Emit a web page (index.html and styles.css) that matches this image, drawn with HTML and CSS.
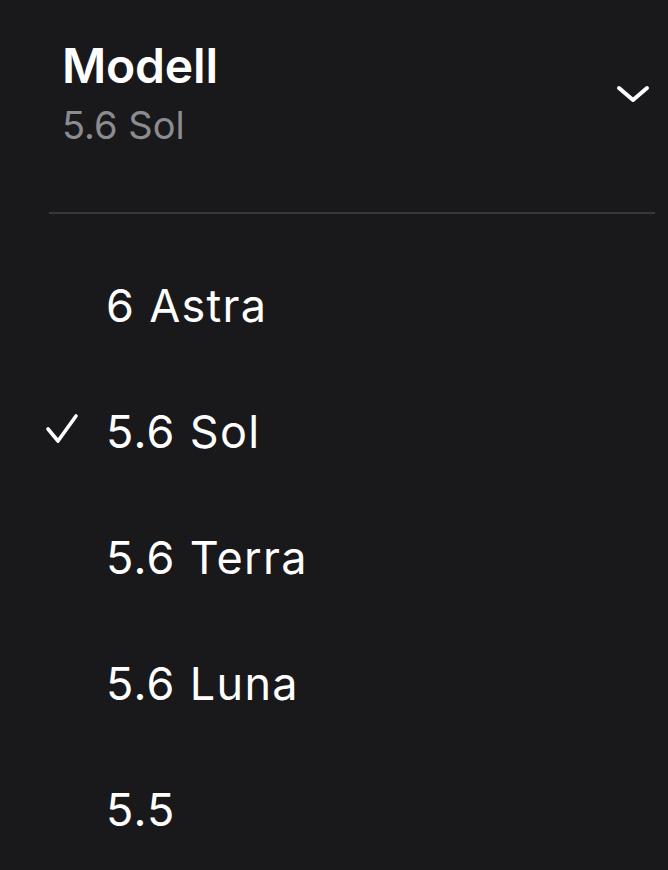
FILE: index.html
```html
<!DOCTYPE html>
<html lang="de">
<head>
    <meta charset="UTF-8">
    <meta name="viewport" content="width=device-width, initial-scale=1.0">
    <link rel="stylesheet" href="styles.css">
    <title>Modell</title>
</head>
<body>
    <div class="panel">
        <div class="picker-head">
            <div class="picker-title">
                <h3 class="picker-label">Modell</h3>
                <div class="picker-value">5.6 Sol</div>
            </div>
            <svg class="chevron" width="34" height="20" viewBox="0 0 34 20">
                <path d="M3 4 L17 16 L31 4" fill="none" stroke="#fff" stroke-width="4" stroke-linecap="round" stroke-linejoin="round"/>
            </svg>
        </div>

        <div class="divider"></div>

        <ul class="options">
            <li class="option"><span class="check"></span>6 Astra</li>
            <li class="option selected">
                <span class="check">
                    <svg width="34" height="32" viewBox="0 0 34 32">
                        <path d="M3 16 L13 28 L31 3" fill="none" stroke="#fff" stroke-width="3.6" stroke-linecap="round" stroke-linejoin="round"/>
                    </svg>
                </span>5.6 Sol</li>
            <li class="option"><span class="check"></span>5.6 Terra</li>
            <li class="option"><span class="check"></span>5.6 Luna</li>
            <li class="option"><span class="check"></span>5.5</li>
        </ul>
    </div>
</body>
</html>
```

FILE: styles.css
```css
*{
    box-sizing: border-box;
}

html, body{
    height: 100%;
}

body{
    margin: 0;
    font-family: Inter, "Liberation Sans", sans-serif;
    background-color: #19191b;
    color: #fff;
    overflow: hidden;
}

.panel{
    padding: 38px 13px 0 49px;
}

.picker-head{
    display: flex;
    align-items: center;
    justify-content: space-between;
    padding: 0 5px 0 13px;
}

.picker-label{
    margin: 0;
    font-size: 48px;
    line-height: 56px;
    font-weight: 600;
    letter-spacing: -0.2px;
}

.picker-value{
    margin-top: 9px;
    font-size: 38px;
    line-height: 44px;
    color: #8c8c90;
}

.chevron{
    display: block;
    margin-top: 2px;
}

.divider{
    height: 2px;
    background-color: #38383b;
    margin-top: 65px;
}

.options{
    list-style: none;
    margin: 28px 0 0;
    padding: 0;
}

.option{
    display: flex;
    align-items: center;
    height: 126px;
    margin-left: -4px;
    font-size: 45px;
    letter-spacing: 1.3px;
}

.check{
    width: 61px;
    flex-shrink: 0;
    display: flex;
    align-items: center;
}

.check svg{
    display: block;
    margin-top: -4px;
}
```
